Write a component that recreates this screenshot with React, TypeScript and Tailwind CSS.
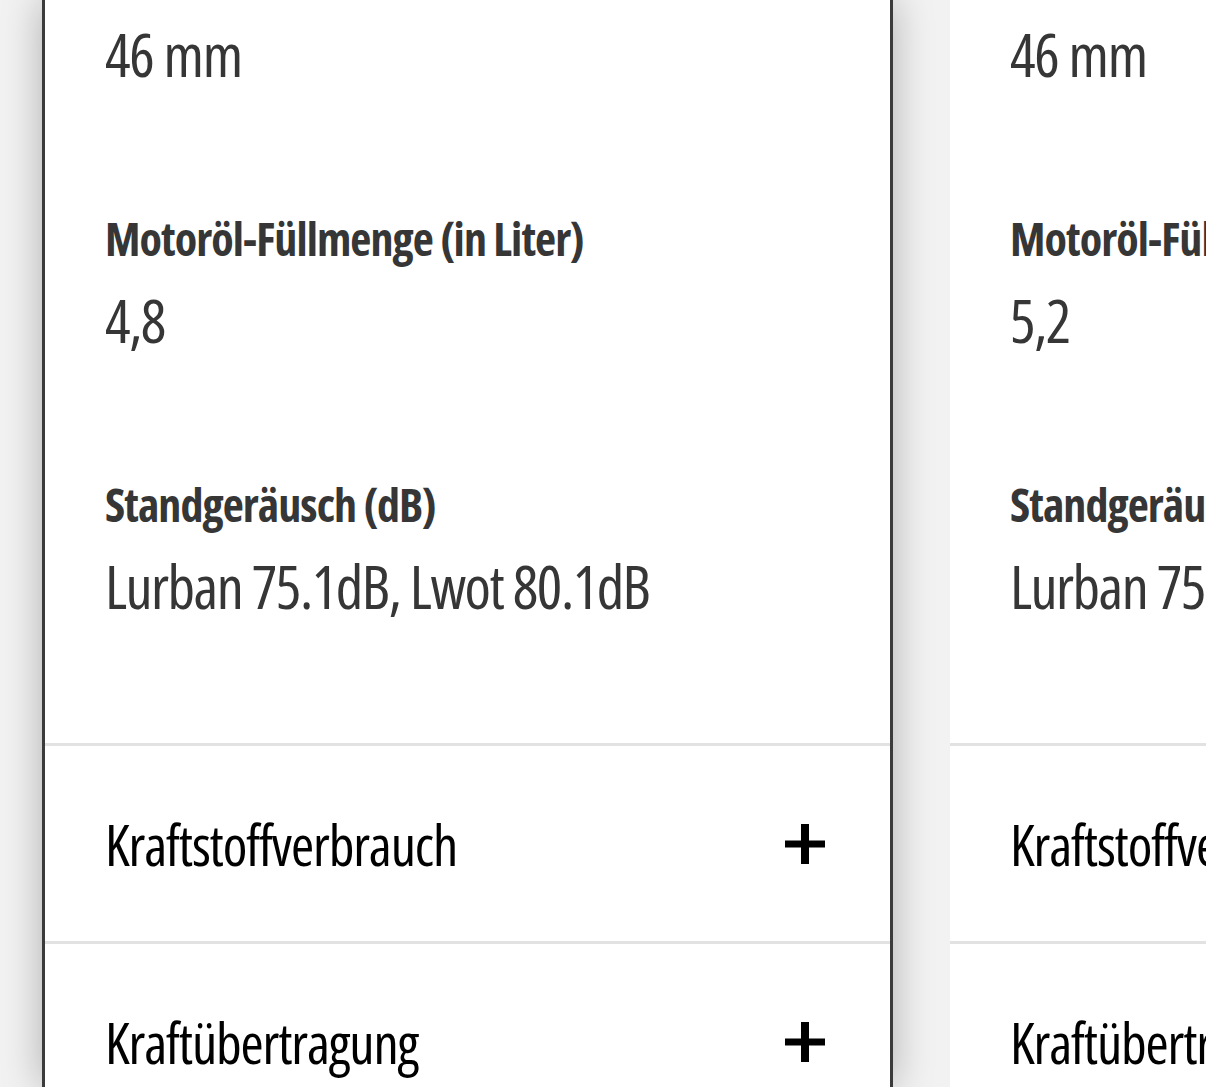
import React from "react";

type Spec = { label: string; value: string };

type CardProps = {
  lead: string;
  specs: Spec[];
  sections: string[];
  selected?: boolean;
};

function PlusIcon() {
  return (
    <svg width="40" height="40" viewBox="0 0 40 40" className="shrink-0" aria-hidden="true">
      <rect x="0" y="16.5" width="40" height="7" fill="#000" />
      <rect x="16" y="0" width="8" height="40" fill="#000" />
    </svg>
  );
}

function CompareCard({ lead, specs, sections, selected }: CardProps) {
  return (
    <div
      className={
        selected
          ? "w-[851px] shrink-0 border-x-[3px] border-[#3b3b3b] bg-white shadow-[0_0_38px_rgba(0,0,0,0.28)]"
          : "w-[845px] shrink-0 bg-white"
      }
    >
      <div className="flex flex-col pb-[125px] pl-[60px] text-[#363636]">
        <p className="mt-[22px] text-[60px] leading-[64px] tracking-[-0.02em]">{lead}</p>
        {specs.map((spec) => (
          <div key={spec.label} className="mt-[126px] flex flex-col">
            <p className="whitespace-nowrap text-[46px] font-bold leading-[52px] tracking-[-0.02em]">{spec.label}</p>
            <p className="mt-[24px] whitespace-nowrap text-[60px] leading-[64px] tracking-[-0.025em]">{spec.value}</p>
          </div>
        ))}
      </div>
      {sections.map((title) => (
        <div
          key={title}
          className="flex h-[198px] items-center justify-between border-t-[3px] border-[#e2e2e2] pl-[60px] pr-[65px]"
        >
          <span className="whitespace-nowrap text-[56px] leading-[60px] tracking-[-0.02em] text-black">{title}</span>
          <PlusIcon />
        </div>
      ))}
    </div>
  );
}

export default function App() {
  const sections = ["Kraftstoffverbrauch", "Kraftübertragung"];
  return (
    <div className="flex h-[1087px] w-[1206px] gap-[57px] overflow-hidden bg-[#f2f2f2] pl-[42px] font-['Open_Sans',sans-serif] font-stretch-[75%]">
      <CompareCard
        selected
        lead="46 mm"
        specs={[
          { label: "Motoröl-Füllmenge (in Liter)", value: "4,8" },
          { label: "Standgeräusch (dB)", value: "Lurban 75.1dB, Lwot 80.1dB" },
        ]}
        sections={sections}
      />
      <CompareCard
        lead="46 mm"
        specs={[
          { label: "Motoröl-Füllmenge (in Liter)", value: "5,2" },
          { label: "Standgeräusch (dB)", value: "Lurban 75.1dB, Lwot 80.1dB" },
        ]}
        sections={sections}
      />
    </div>
  );
}
